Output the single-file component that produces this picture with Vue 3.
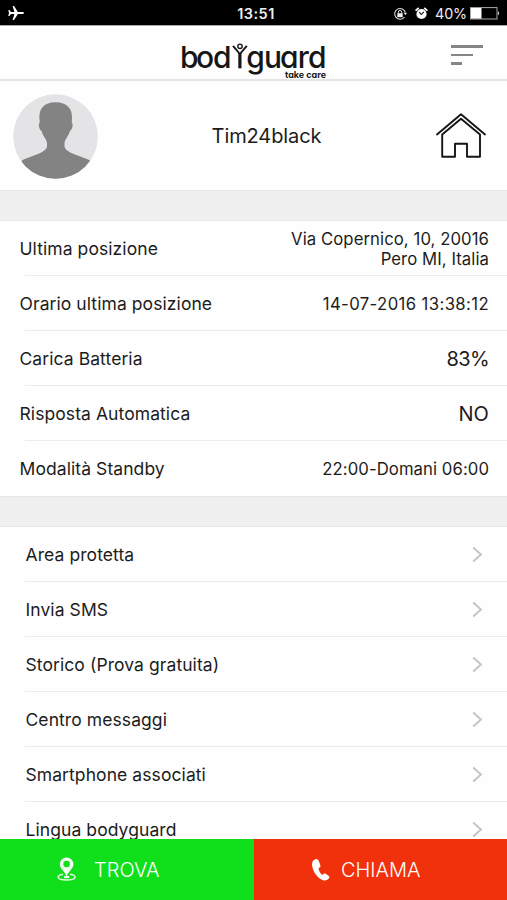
<script setup>
const details = [
  { label: 'Ultima posizione', lines: ['Via Copernico, 10, 20016', 'Pero MI, Italia'] },
  { label: 'Orario ultima posizione', lines: ['14-07-2016 13:38:12'], kind: 'date' },
  { label: 'Carica Batteria', lines: ['83%'], kind: 'large tight' },
  { label: 'Risposta Automatica', lines: ['NO'], kind: 'large' },
  { label: 'Modalità Standby', lines: ['22:00-Domani 06:00'] },
]

const menu = [
  'Area protetta',
  'Invia SMS',
  'Storico (Prova gratuita)',
  'Centro messaggi',
  'Smartphone associati',
  'Lingua bodyguard',
]
</script>

<template>
  <div class="screen">
    <header class="status">
      <svg class="plane" width="17" height="16" viewBox="0 0 17 16">
        <path d="M16 8c0-.7-.8-1.1-2-1.1H9.900L6 1H4.600l1.800 5.900H3L1.400 5H.3L1 8l-.7 3h1.100L3 9.100h3.400L4.600 15H6l3.900-5.900H14c1.200 0 2-.4 2-1.100z" fill="#fff" />
      </svg>
      <span class="clock">13:51</span>
      <div class="indicators">
        <svg class="lock" width="15" height="14" viewBox="0 0 15 14">
          <path d="M11.500 10a5.400 5.400 0 1 1 .8-4.500" fill="none" stroke="#ddd" stroke-width="1.100" />
          <path d="M10.600 5.700h3.400l-1.500 2.500z" fill="#ddd" />
          <rect x="4.300" y="6.200" width="5.400" height="4" fill="#eee" />
          <path d="M5.300 6.500V5.200a1.700 1.700 0 0 1 3.400 0v1.300" fill="none" stroke="#eee" stroke-width="1" />
        </svg>
        <svg class="alarm" width="13" height="13" viewBox="0 0 13 13">
          <circle cx="6.500" cy="7" r="5.100" fill="#fff" />
          <path d="M1.200 3.200 3.200 1.400M11.800 3.200 9.800 1.400" stroke="#fff" stroke-width="1.800" stroke-linecap="round" />
          <path d="M4.200 5.200 6.300 7.500 8.800 4.800" fill="none" stroke="#111" stroke-width="1.100" />
        </svg>
        <span class="percent">40%</span>
        <svg class="battery" width="30" height="13" viewBox="0 0 30 13">
          <rect x=".5" y=".6" width="26.500" height="11.400" fill="none" stroke="#aaa" />
          <rect x="1" y="1" width="10.500" height="10.600" fill="#fff" />
          <path d="M28 4.300c1.600.5 1.600 3.500 0 4z" fill="#ccc" />
        </svg>
      </div>
    </header>

    <nav class="nav">
      <svg class="logo" width="150" height="42" viewBox="0 0 150 42">
        <text class="word" x="0 16 33" y="30.300">bod</text>
        <text class="word" x="66.300 84 100 117.800 128" y="30.300">guard</text>
        <g fill="none" stroke="#161616">
          <circle cx="60" cy="8.300" r="2.200" stroke-width="1.400" />
          <path d="M53 7.800 59.900 16 66.800 7.800" stroke-width="1.900" stroke-linejoin="round" />
          <path d="M59.900 15V30.300" stroke-width="3.200" />
        </g>
        <text class="tagline" x="105" y="40" textLength="41" lengthAdjust="spacingAndGlyphs">take care</text>
      </svg>
      <div class="burger"><i></i><i></i><i></i></div>
    </nav>

    <section class="profile">
      <svg class="avatar" width="85" height="85" viewBox="0 0 85 85">
        <clipPath id="disc"><circle cx="42.500" cy="42.500" r="42.300" /></clipPath>
        <g clip-path="url(#disc)">
          <rect width="85" height="85" fill="#e4e4e6" />
          <path d="M42.500 8.200C31.500 8 25.800 14.500 26.400 24.500L26.800 28.500C25 29 26 36 28.500 36.800 29.500 42 33.500 45 34 49v3.500C32.500 59.500 18 61.500 9 66.500L0 85H85L77 66.500C68 61.500 53 59.500 51.500 52.500V49c.5-4 4.500-7 5.500-12.200C59.500 36 60.500 29 58.700 28.500L59 24.500C59.600 14.500 54 8.400 42.500 8.200z" fill="#838383" />
        </g>
      </svg>
      <span class="name">Tim24black</span>
      <svg class="house" width="52" height="48" viewBox="0 0 52 48" fill="none" stroke="#161616" stroke-width="1.900" stroke-linejoin="round" stroke-linecap="round">
        <path d="M2 22.500 26 2.300 50 22.500" />
        <path d="M7.200 22.500V44.800H20V31.800H32V44.800H45V22.500L26 6.800z" />
      </svg>
    </section>

    <div class="gap"></div>

    <section class="details">
      <div v-for="row in details" :key="row.label" class="row">
        <span class="label">{{ row.label }}</span>
        <span class="value" :class="row.kind">
          <span v-for="line in row.lines" :key="line">{{ line }}</span>
        </span>
      </div>
    </section>

    <div class="gap"></div>

    <section class="menu">
      <div v-for="item in menu" :key="item" class="row">
        <span class="label">{{ item }}</span>
        <svg class="chevron" width="11" height="17" viewBox="0 0 11 17">
          <path d="M1.200 1.500 9 8.500 1.200 15.500" fill="none" stroke="#c4c4c6" stroke-width="1.900" />
        </svg>
      </div>
    </section>

    <footer class="actions">
      <button class="action find">
        <svg width="20" height="25" viewBox="0 0 20 25">
          <path d="M6 17.300C3 17.800 1.200 18.700 1.200 20c0 1.900 3.700 3 8.400 3s8.400-1.100 8.400-3c0-1.300-2-2.200-5-2.700" fill="none" stroke="#d8fbd9" stroke-width="1.600" />
          <path fill-rule="evenodd" d="M9.600 20C8.700 15 2.800 12 2.800 7.200a6.800 6.800 0 0 1 13.600 0C16.400 12 10.500 15 9.600 20zM9.600 3.700a3.300 3.300 0 1 0 0 6.600 3.300 3.300 0 0 0 0-6.600z" fill="#f4fff4" />
          <ellipse cx="9.600" cy="20" rx="3" ry="1.200" fill="#f4fff4" />
        </svg>
        <span>TROVA</span>
      </button>
      <button class="action call">
        <svg width="20" height="24" viewBox="0 0 20 24">
          <path d="M4.200 1.200C1.800 2 .7 4.500 1.100 7.500 2 14 6.500 20 12 22.300c2.400.9 5-.2 6.100-2.200.5-.9.200-1.700-.6-2.400l-2.800-2c-.8-.5-1.800-.4-2.400.4l-.8 1c-2-1.100-3.600-3.900-4-6.800l1.100-.8c.8-.5 1.100-1.200.8-2L8.200 4l-1.200-2.200C6.400.9 5.200.8 4.200 1.200z" fill="#fff" />
        </svg>
        <span>CHIAMA</span>
      </button>
    </footer>
  </div>
</template>

<style>
body {
  margin: 0;
  background: #fff;
}
</style>

<style scoped>
.screen {
  width: 507px;
  height: 900px;
  overflow: hidden;
  display: flex;
  flex-direction: column;
  background: #fefefe;
  color: #1c1c1c;
  font-family: Inter, 'Liberation Sans', sans-serif;
}
.screen > * {
  flex: none;
  box-sizing: border-box;
}
svg {
  display: block;
}
.status {
  height: 25px;
  padding: 1px 7px 0 8px;
  background: #000;
  color: #eee;
  display: grid;
  grid-template-columns: 1fr auto 1fr;
  align-items: center;
}
.clock {
  font-size: 14.500px;
  font-weight: 600;
  letter-spacing: 0.5px;
  padding: 1px 0 0 4px;
}
.indicators {
  display: flex;
  justify-content: flex-end;
  align-items: center;
  padding-top: 1px;
}
.alarm {
  margin-left: 7px;
}
.percent {
  margin-left: 7px;
  font-size: 14.300px;
  letter-spacing: -0.1px;
}
.battery {
  margin-left: 3px;
}
.nav {
  height: 56px;
  padding: 12px 24px 0 180px;
  border-top: 1px solid #aaa;
  border-bottom: 2px solid #e4e4e4;
  display: flex;
  justify-content: space-between;
}
.logo {
  overflow: visible;
}
.word {
  font-size: 30px;
  font-weight: 500;
  font-feature-settings: 'cv11';
  fill: #161616;
}
.tagline {
  font-size: 9px;
  font-weight: 700;
  font-feature-settings: 'cv11';
  fill: #161616;
}
.burger {
  width: 32px;
  padding-top: 7px;
  display: flex;
  flex-direction: column;
  gap: 6px;
}
.burger i {
  height: 2.500px;
  background: #858585;
}
.burger i:nth-child(2) {
  width: 22px;
}
.burger i:nth-child(3) {
  width: 11px;
}
.profile {
  height: 109px;
  padding: 1px 20px 0 13px;
  display: grid;
  grid-template-columns: 85px 1fr 52px;
  align-items: center;
}
.name {
  font-size: 20px;
  letter-spacing: -0.1px;
  text-align: center;
}
.gap {
  height: 31px;
  background: #f0f0f0;
  border-top: 1px solid #e6e6e6;
  border-bottom: 1px solid #e9e9e9;
}
.row {
  height: 55px;
  position: relative;
  display: flex;
  align-items: center;
  justify-content: space-between;
}
.row:not(:last-child)::after {
  content: '';
  position: absolute;
  left: 25px;
  right: 0;
  bottom: 0;
  height: 1px;
  background: #ebebeb;
}
.label {
  font-size: 17.500px;
  letter-spacing: 0.08px;
}
.details .row {
  padding: 0 18px 0 19.500px;
}
.value {
  font-size: 16.700px;
  line-height: 20px;
  letter-spacing: 0.08px;
  display: flex;
  flex-direction: column;
  align-items: flex-end;
}
.value.date {
  letter-spacing: 0.39px;
}
.value.large {
  font-size: 20px;
}
.value.tight {
  letter-spacing: -0.6px;
}
.menu {
  height: 312px;
  overflow: hidden;
}
.menu .row {
  padding: 0 24px 1px 25.500px;
  box-sizing: border-box;
}
.actions {
  height: 61px;
  display: grid;
  grid-template-columns: 254px 253px;
}
.action {
  border: 0;
  padding: 0 0 0 57px;
  display: flex;
  align-items: center;
  gap: 17px;
  color: #fff;
  font: 300 20px Inter, 'Liberation Sans', sans-serif;
}
.find {
  background: #10df1b;
}
.call {
  background: #f1310b;
  gap: 10px;
}
</style>
